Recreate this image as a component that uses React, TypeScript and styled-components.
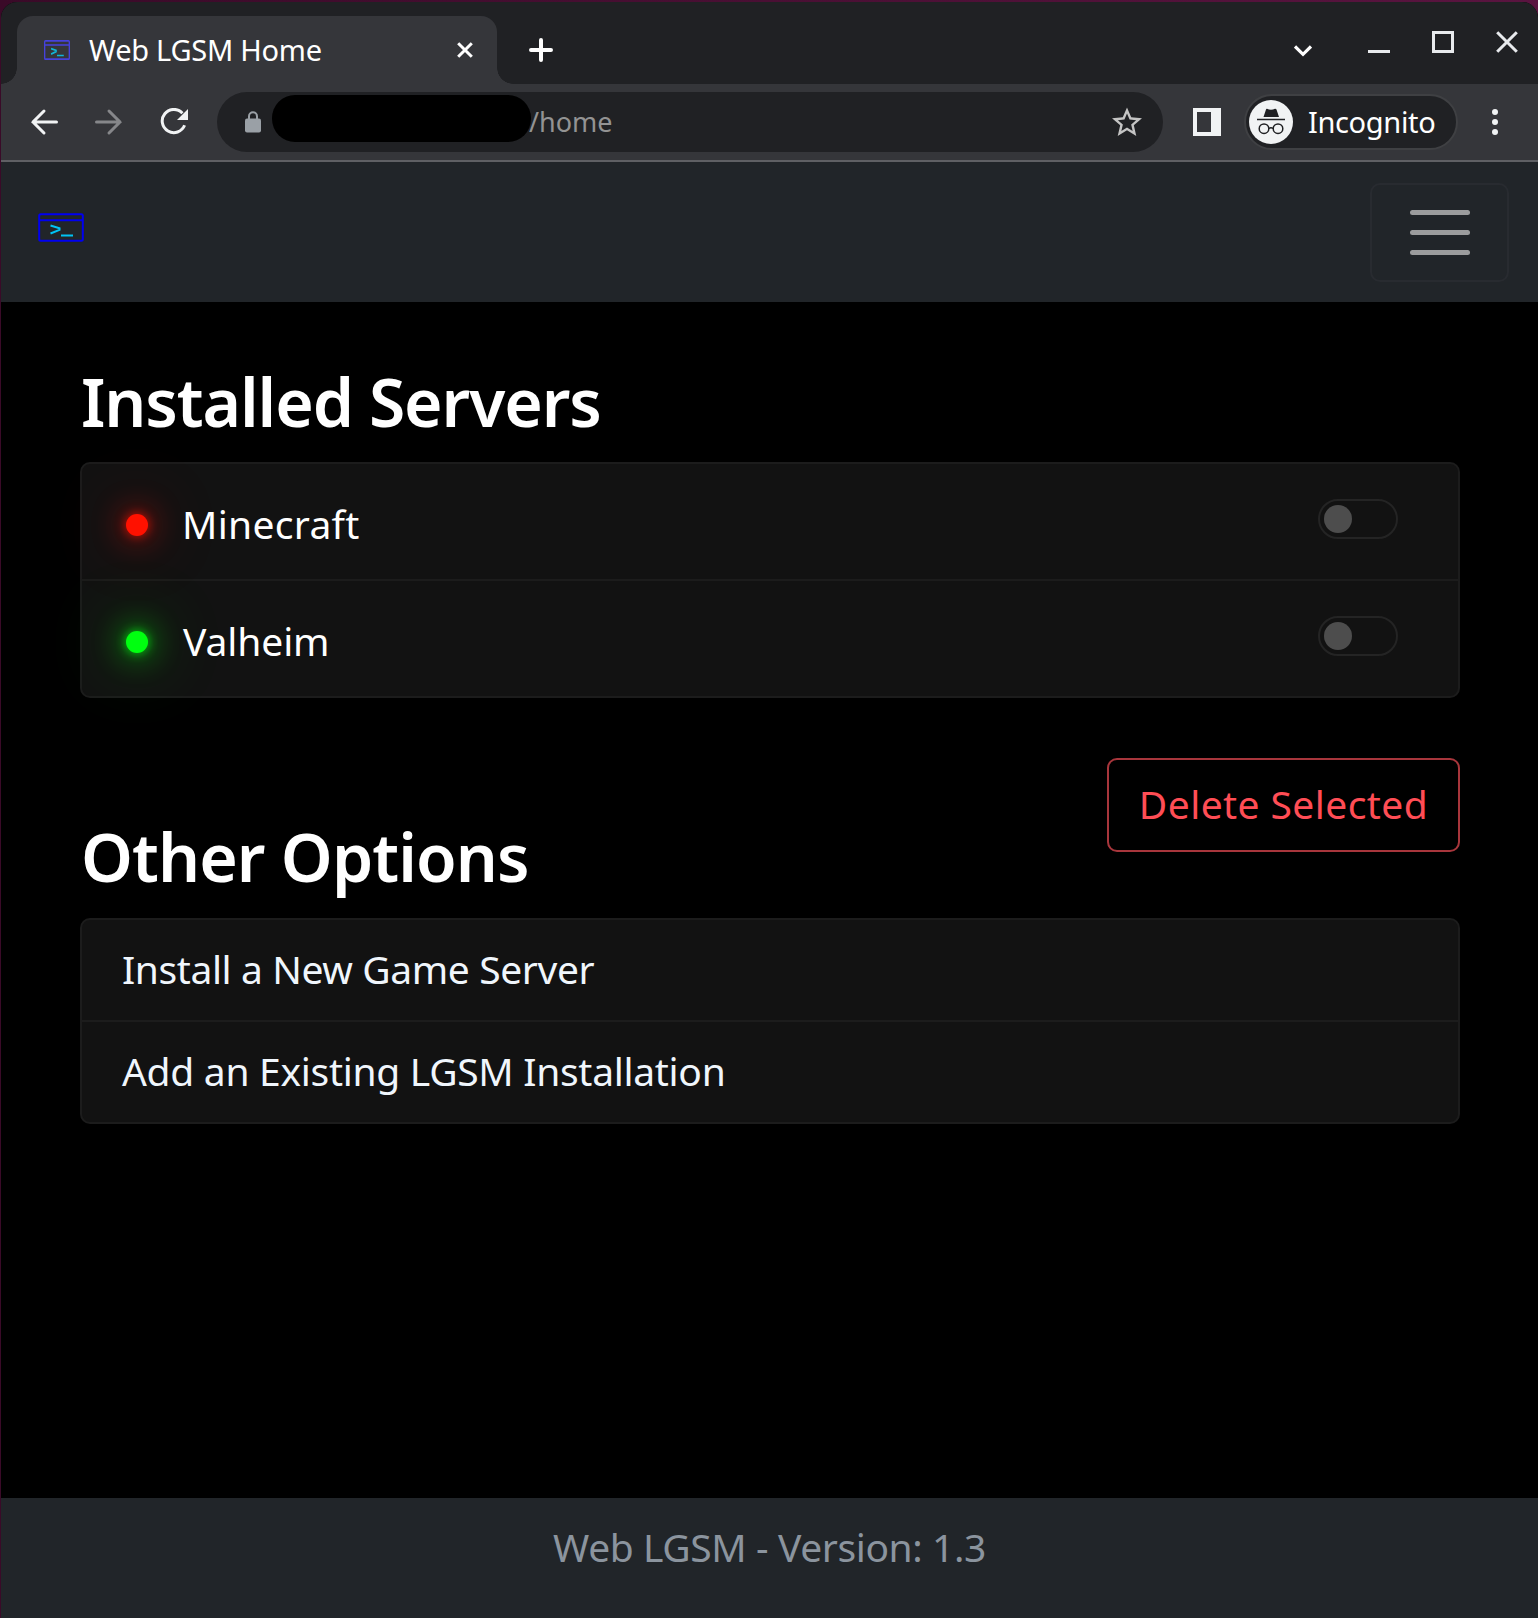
import React from "react";
import styled, { createGlobalStyle, css } from "styled-components";

const GlobalStyle = createGlobalStyle`
  * { box-sizing: border-box; }
  body { margin: 0; background: #3a0a28; font-family: "Noto Sans", "Open Sans", sans-serif; }
  button { font-family: inherit; margin: 0; padding: 0; background: none; border: 0; }
  svg { display: block; flex: none; }
`;

const Desktop = styled.div`
  width: 1538px;
  height: 1618px;
  padding: 2px 0 0 1px;
  background: linear-gradient(90deg, #3a0a28, #5a1440);
  overflow: hidden;
`;

const Window = styled.div`
  display: flex;
  flex-direction: column;
  height: 1616px;
  border-radius: 16px 16px 0 0;
  overflow: hidden;
  background: #000;
`;

const TabStrip = styled.header`
  display: flex;
  height: 82px;
  padding: 14px 20px 0 0;
  background: #202124;
`;

const curve = css`
  content: "";
  width: 16px;
  height: 16px;
  align-self: flex-end;
  flex: none;
`;

const TabWrap = styled.div`
  display: flex;
  &::before {
    ${curve}
    background: radial-gradient(circle at 0 0, #202124 15.5px, #35363a 16px);
  }
  &::after {
    ${curve}
    background: radial-gradient(circle at 100% 0, #202124 15.5px, #35363a 16px);
  }
`;

const Tab = styled.div`
  display: flex;
  align-items: center;
  width: 480px;
  padding: 0 24px 0 27px;
  border-radius: 16px 16px 0 0;
  background: #35363a;
`;

const TabTitle = styled.span`
  flex: 1;
  margin: 0 0 1px 19px;
  color: #fff;
  font-size: 29px;
  line-height: 40px;
  letter-spacing: -0.26px;
  white-space: nowrap;
`;

const NewTab = styled.button`
  height: 24px;
  margin: 22px 0 0 16px;
`;

const WindowControls = styled.div`
  display: flex;
  align-items: flex-start;
  margin-left: auto;
  padding-top: 15px;
`;

const Control = styled.button<{ $gap: number; $drop?: number }>`
  margin-left: ${(p) => p.$gap}px;
  margin-top: ${(p) => p.$drop ?? 0}px;
`;

const Toolbar = styled.div`
  display: flex;
  align-items: center;
  height: 78px;
  padding: 0 39px 0 29px;
  background: #35363a;
  border-bottom: 2px solid #5f6064;
`;

const NavButtons = styled.div`
  display: flex;
  align-items: center;
  width: 187px;
  gap: 37px;
`;

const AddressBar = styled.div`
  display: flex;
  align-items: center;
  width: 946px;
  height: 60px;
  padding: 0 21px 0 28px;
  border-radius: 30px;
  background: #202124;
`;

const Redaction = styled.span`
  width: 259px;
  height: 47px;
  margin: 0 0 7px 11px;
  border-radius: 23px;
  background: #000;
`;

const UrlPath = styled.span`
  flex: 1;
  margin-left: -2px;
  color: #939393;
  font-size: 27px;
  line-height: 40px;
  letter-spacing: 0;
`;

const SidePanel = styled.span`
  width: 28px;
  height: 28px;
  margin-left: 30px;
  border: solid #f1f3f4;
  border-width: 4px 10px 4px 4px;
`;

const ProfilePill = styled.div`
  display: flex;
  align-items: center;
  width: 214px;
  height: 56px;
  margin: 0 34px 0 23px;
  padding-left: 3px;
  border: 2px solid #3f4043;
  border-radius: 28px;
  background: #202124;
`;

const ProfileName = styled.span`
  margin-left: 15px;
  color: #fff;
  font-size: 29px;
  line-height: 40px;
  letter-spacing: -0.35px;
`;

const Navbar = styled.nav`
  display: flex;
  justify-content: space-between;
  height: 140px;
  padding: 21px 29px 0 37px;
  background: #212529;
`;

const Brand = styled.a`
  padding-top: 30px;
`;

const Toggler = styled.button`
  display: flex;
  flex-direction: column;
  align-items: center;
  justify-content: center;
  gap: 15px;
  width: 139px;
  height: 99px;
  border: 2px solid #282b30;
  border-radius: 10px;
`;

const TogglerBar = styled.span`
  width: 60px;
  height: 5px;
  border-radius: 3px;
  background: #9b9c9d;
`;

const Main = styled.main`
  flex: 1;
  padding: 59px 78px 0 79px;
`;

const Heading = styled.h2<{ $spacing: number }>`
  margin: 0;
  padding-left: 1px;
  color: #fff;
  font-size: 66px;
  font-weight: 600;
  line-height: 80px;
  letter-spacing: ${(p) => p.$spacing}px;
`;

const List = styled.ul`
  margin: 0;
  padding: 0;
  list-style: none;
  border: 2px solid #1c1c1c;
  border-radius: 10px;
  background: #121212;
`;

const ServerRow = styled.li`
  display: flex;
  align-items: center;
  height: 115px;
  padding: 0 60px 0 44px;
  & + & {
    height: 117px;
    border-top: 2px solid #1c1c1c;
  }
`;

const StatusDot = styled.span<{ $on: boolean }>`
  width: 22px;
  height: 22px;
  margin-top: 7px;
  border-radius: 50%;
  background: ${(p) => (p.$on ? "#00ff10" : "#ff1100")};
  box-shadow: ${(p) =>
    p.$on
      ? "0 0 10px 1px rgba(0,255,16,.6), 0 0 30px 5px rgba(0,255,16,.45), 0 0 70px 16px rgba(0,255,16,.16)"
      : "0 0 10px 1px rgba(255,17,0,.6), 0 0 30px 5px rgba(255,17,0,.4), 0 0 70px 14px rgba(255,17,0,.14)"};
`;

const ServerName = styled.span<{ $spacing: number; $indent: number }>`
  margin: 5px auto 0 ${(p) => p.$indent}px;
  color: #fff;
  font-size: 39px;
  line-height: 54px;
  letter-spacing: ${(p) => p.$spacing}px;
`;

const Switch = styled.span`
  display: flex;
  align-items: center;
  width: 80px;
  height: 40px;
  margin-bottom: 5px;
  padding-left: 4px;
  border: 2px solid #242424;
  border-radius: 20px;
  &::before {
    content: "";
    width: 28px;
    height: 28px;
    border-radius: 50%;
    background: #4d4d4d;
  }
`;

const Actions = styled.div`
  display: flex;
  justify-content: flex-end;
  margin-top: 60px;
`;

const DeleteButton = styled.button`
  width: 353px;
  height: 94px;
  padding-bottom: 2px;
  border: 2px solid #a8363c;
  border-radius: 10px;
  color: #ff4d55;
  font-size: 39px;
  line-height: 54px;
  letter-spacing: 0.42px;
  white-space: nowrap;
`;

const OptionsSection = styled.section`
  margin-top: -36px;
  ${List} { margin-top: 22px; }
`;

const ServersSection = styled.section`
  ${List} { margin-top: 21px; }
`;

const OptionRow = styled.li<{ $spacing: number }>`
  height: 100px;
  padding: 22px 40px 0;
  color: #f0f6fc;
  font-size: 39px;
  line-height: 54px;
  letter-spacing: ${(p) => p.$spacing}px;
  & + & {
    height: 102px;
    border-top: 2px solid #1c1c1c;
  }
`;

const Footer = styled.footer`
  height: 120px;
  padding-top: 22px;
  background: #212529;
  color: #8b949e;
  font-size: 39px;
  line-height: 54px;
  letter-spacing: -0.4px;
  text-align: center;
`;

interface LogoProps {
  width: number;
  height: number;
  frame: string;
  prompt: string;
  stroke: number;
}

const TerminalLogo = ({ width, height, frame, prompt, stroke }: LogoProps) => (
  <svg width={width} height={height} viewBox="0 0 46 29" preserveAspectRatio="none" fill="none">
    <rect x="1.2" y="1.2" width="43.6" height="26.6" rx="1.5" stroke={frame} strokeWidth={stroke} />
    <path d="M1.5 7.2H44.5" stroke={frame} strokeWidth={stroke} />
    <path d="M12.5 12.5L21.5 15.2V16.8L12.5 20.5M23 22.5H35" stroke={prompt} strokeWidth={stroke} />
  </svg>
);

const Cross = ({ size, stroke, color }: { size: number; stroke: number; color: string }) => (
  <svg width={size} height={size} viewBox={`0 0 ${size} ${size}`} stroke={color} strokeWidth={stroke}>
    <path d={`M1.2 1.2L${size - 1.2} ${size - 1.2}M${size - 1.2} 1.2L1.2 ${size - 1.2}`} />
  </svg>
);

const IncognitoIcon = () => (
  <svg width="44" height="44" viewBox="0 0 44 44" fill="none">
    <circle cx="22" cy="22" r="22" fill="#f1f3f4" />
    <path d="M18 8.7Q22 10.7 26 8.7Q27 8.5 27.5 9.5L30 17H14.5L17 9.5Q17.3 8.5 18 8.7Z" fill="#202124" />
    <path d="M8 19.5H36" stroke="#202124" strokeWidth="1.6" />
    <circle cx="15" cy="28.7" r="4.8" stroke="#202124" strokeWidth="1.5" />
    <circle cx="29" cy="28.7" r="4.8" stroke="#202124" strokeWidth="1.5" />
    <path d="M19.8 28.5Q22 26.8 24.2 28.5" stroke="#202124" strokeWidth="1.5" />
  </svg>
);

const servers = [
  { name: "Minecraft", on: false, spacing: 0.3, indent: 34 },
  { name: "Valheim", on: true, spacing: -0.1, indent: 35 },
];

const options = [
  { label: "Install a New Game Server", spacing: -0.4 },
  { label: "Add an Existing LGSM Installation", spacing: -0.3 },
];

export default function App() {
  return (
    <Desktop>
      <GlobalStyle />
      <Window>
        <TabStrip>
          <TabWrap>
            <Tab>
              <TerminalLogo width={26} height={20} frame="#4642dc" prompt="#12b4d6" stroke={2.4} />
              <TabTitle>Web LGSM Home</TabTitle>
              <Cross size={16} stroke={3} color="#fff" />
            </Tab>
          </TabWrap>
          <NewTab aria-label="New tab">
            <svg width="24" height="24" stroke="#fff" strokeWidth="4" strokeLinecap="round">
              <path d="M12 2V22M2 12H22" />
            </svg>
          </NewTab>
          <WindowControls>
            <Control $gap={0} $drop={14} aria-label="Search tabs">
              <svg width="18" height="12" fill="none" stroke="#fff" strokeWidth="3.2">
                <path d="M1 1.5L9 9.3L17 1.5" />
              </svg>
            </Control>
            <Control $gap={56} aria-label="Minimize">
              <svg width="22" height="22">
                <path d="M0 20.5H22" stroke="#e8eaed" strokeWidth="3" />
              </svg>
            </Control>
            <Control $gap={42} aria-label="Maximize">
              <svg width="22" height="22">
                <rect x="1.5" y="1.5" width="19" height="19" fill="none" stroke="#e8eaed" strokeWidth="3" />
              </svg>
            </Control>
            <Control $gap={42} aria-label="Close">
              <Cross size={22} stroke={3} color="#e8eaed" />
            </Control>
          </WindowControls>
        </TabStrip>

        <Toolbar>
          <NavButtons>
            <svg width="28" height="28" fill="none" stroke="#f1f3f4" strokeWidth="3" strokeLinecap="round">
              <path d="M26.5 14H3M14 3L3 14L14 25" />
            </svg>
            <svg width="28" height="28" fill="none" stroke="#86878a" strokeWidth="3" strokeLinecap="round">
              <path d="M1.5 14H25M14 3L25 14L14 25" />
            </svg>
            <svg width="28" height="28" fill="none">
              <path d="M22.4 5.2A11.6 11.6 0 1 0 24.6 17.3" stroke="#f1f3f4" strokeWidth="3" />
              <path d="M28 1V12H17Z" fill="#f1f3f4" />
            </svg>
          </NavButtons>
          <AddressBar>
            <svg width="16" height="22" fill="none">
              <rect x="0" y="7.5" width="16" height="14" rx="2" fill="#9aa0a6" />
              <path d="M4 9V5.2A4 4 0 0 1 12 5.2V9" stroke="#9aa0a6" strokeWidth="2" />
            </svg>
            <Redaction />
            <UrlPath>/home</UrlPath>
            <svg width="30" height="30" viewBox="0 0 24 24" fill="#c4c4c4">
              <path d="M22 9.24l-7.19-.62L12 2 9.19 8.63 2 9.24l5.46 4.73L5.82 21 12 17.27 18.18 21l-1.63-7.03L22 9.24zM12 15.4l-3.76 2.27 1-4.28-3.32-2.88 4.38-.38L12 6.1l1.71 4.04 4.38.38-3.32 2.88 1 4.28L12 15.4z" transform="translate(-2.4 -2.1) scale(1.2)" />
            </svg>
          </AddressBar>
          <SidePanel />
          <ProfilePill>
            <IncognitoIcon />
            <ProfileName>Incognito</ProfileName>
          </ProfilePill>
          <svg width="6" height="28" fill="#f1f3f4">
            <circle cx="3" cy="4" r="3" />
            <circle cx="3" cy="14" r="3" />
            <circle cx="3" cy="24" r="3" />
          </svg>
        </Toolbar>

        <Navbar>
          <Brand>
            <TerminalLogo width={46} height={29} frame="#0000f0" prompt="#00c3f5" stroke={2} />
          </Brand>
          <Toggler aria-label="Toggle navigation">
            <TogglerBar />
            <TogglerBar />
            <TogglerBar />
          </Toggler>
        </Navbar>

        <Main>
          <ServersSection>
            <Heading $spacing={-1.1}>Installed Servers</Heading>
            <List>
              {servers.map((s) => (
                <ServerRow key={s.name}>
                  <StatusDot $on={s.on} />
                  <ServerName $spacing={s.spacing} $indent={s.indent}>{s.name}</ServerName>
                  <Switch />
                </ServerRow>
              ))}
            </List>
            <Actions>
              <DeleteButton>Delete Selected</DeleteButton>
            </Actions>
          </ServersSection>
          <OptionsSection>
            <Heading $spacing={-0.9}>Other Options</Heading>
            <List>
              {options.map((o) => (
                <OptionRow key={o.label} $spacing={o.spacing}>{o.label}</OptionRow>
              ))}
            </List>
          </OptionsSection>
        </Main>

        <Footer>Web LGSM - Version: 1.3</Footer>
      </Window>
    </Desktop>
  );
}
